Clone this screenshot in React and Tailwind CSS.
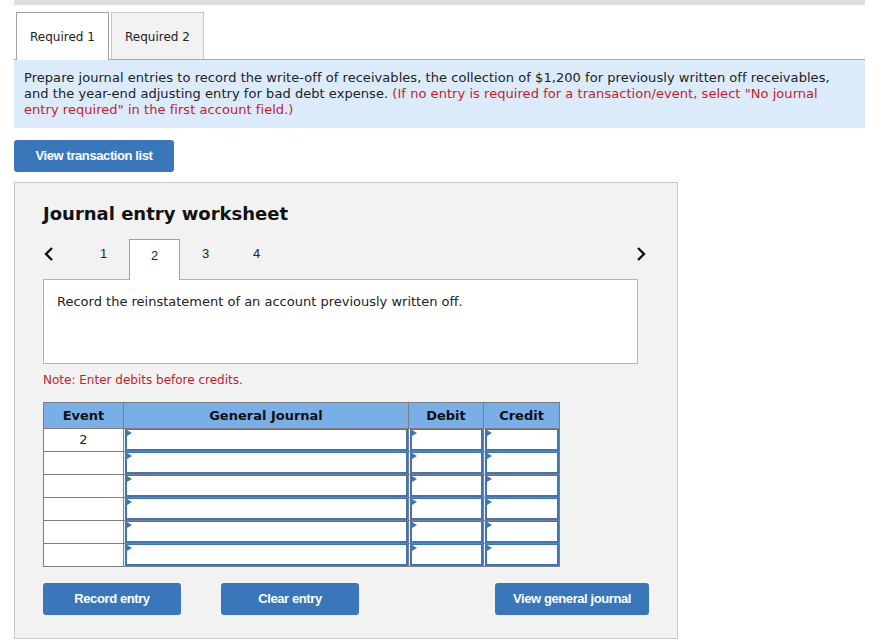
import React from "react";

const verdana = { fontFamily: '"DejaVu Sans", Verdana, sans-serif' };
const arial = { fontFamily: '"Liberation Sans", Arial, sans-serif' };
const narrow = { fontFamily: '"Liberation Sans Narrow", "Arial Narrow", "Liberation Sans", sans-serif' };

function Btn({ children, className = "" }) {
  return (
    <button
      className={"h-[32px] shrink-0 rounded-[3px] bg-[#3a76ba] text-white text-[13px] font-bold tracking-[-0.4px] " + className}
      style={narrow}
    >
      {children}
    </button>
  );
}

function Cell({ w }) {
  return (
    <div className={"h-[23px] border-l border-t border-[#7f7f7f] pl-px " + w}>
      <div className="relative h-full w-full border-x-2 border-b-2 border-t border-[#3f74b7] bg-white">
        <div className="absolute left-0 top-0 h-0 w-0 border-y-[3px] border-l-[5px] border-y-transparent border-l-[#3f74b7]" />
      </div>
    </div>
  );
}

export default function App() {
  const rows = [0, 1, 2, 3, 4, 5];
  return (
    <div className="w-[896px] h-[643px] overflow-hidden bg-white text-[#222]" style={verdana}>
      <div className="ml-[14px] w-[851px]">
        <div className="h-[5px] bg-[#dfdfdf]" />
        <div className="mt-[7px] flex items-end border-b border-[#a8a8a8] pl-[2px]">
          <div className="-mb-px flex h-[48px] w-[93px] items-center justify-center border border-b-0 border-[#a0a0a0] bg-white text-[12px]">
            Required 1
          </div>
          <div className="ml-[2px] flex h-[47px] w-[93px] items-center justify-center border border-b-0 border-[#c8c8c8] bg-[#f2f2f2] pt-px text-[12px]">
            Required 2
          </div>
        </div>
        <div className="bg-[#dbebf9] px-[10px] pt-[10px] pb-[10px] text-[13px] leading-[16px] tracking-[0.05px] text-[#222]">
          Prepare journal entries to record the write-off of receivables, the collection of $1,200 for previously written off receivables, and the year-end adjusting entry for bad debt expense.{" "}
          <span className="text-[#c3222b]">(If no entry is required for a transaction/event, select "No journal entry required" in the first account field.)</span>
        </div>
        <Btn className="mt-[12px] w-[160px]">View transaction list</Btn>
        <div className="mt-[10px] w-[664px] border border-[#c8c8c8] bg-[#f2f2f2] pl-[28px] pr-[39px] pt-[19px] pb-[23px]">
          <div className="text-[18px] font-bold leading-[24px] text-[#111]">Journal entry worksheet</div>
          <div className="mt-[13px] flex h-[40px] items-start">
            <div className="flex h-[30px] w-[35px] items-center">
              <svg width="10" height="16" viewBox="0 0 10 16" className="ml-[1px]">
                <polyline points="8,2 2,8 8,14" fill="none" stroke="#111" strokeWidth="2.4" />
              </svg>
            </div>
            <div className="flex h-full items-start text-[13px]" style={arial}>
              <div className="flex h-[30px] w-[51px] items-center justify-center">1</div>
              <div className="relative z-10 -mb-px flex h-[41px] w-[51px] items-start justify-center border border-b-0 border-[#a0a0a0] bg-white pt-[6px]">2</div>
              <div className="flex h-[30px] w-[51px] items-center justify-center">3</div>
              <div className="flex h-[30px] w-[51px] items-center justify-center">4</div>
            </div>
            <div className="flex-1" />
            <div className="flex h-[30px] items-center">
              <svg width="10" height="16" viewBox="0 0 10 16" className="-mr-[8px]">
                <polyline points="2,2 8,8 2,14" fill="none" stroke="#111" strokeWidth="2.4" />
              </svg>
            </div>
          </div>
          <div className="h-[85px] border border-[#b4b4b4] bg-white px-[13px] pt-[14px] text-[13px] leading-[16px]">
            Record the reinstatement of an account previously written off.
          </div>
          <div className="mt-[8px] text-[12px] leading-[16px] text-[#c3222b]">Note: Enter debits before credits.</div>
          <div className="mt-[14px] w-[517px] border-r border-b border-[#7f7f7f]">
            <div className="flex h-[26px] bg-[#7aaee6] text-[13px] font-bold text-[#111]">
              <div className="flex w-[80px] items-center justify-center border-l border-t border-[#7f7f7f]">Event</div>
              <div className="flex w-[285px] items-center justify-center border-l border-t border-[#7f7f7f]">General Journal</div>
              <div className="flex w-[75px] items-center justify-center border-l border-t border-[#7f7f7f]">Debit</div>
              <div className="flex w-[76px] items-center justify-center border-l border-t border-[#7f7f7f]">Credit</div>
            </div>
            {rows.map((r) => (
              <div key={r} className="flex">
                <div className="flex h-[23px] w-[80px] items-center justify-center border-l border-t border-[#7f7f7f] bg-white text-[13px]">
                  {r === 0 ? "2" : ""}
                </div>
                <Cell w="w-[285px]" />
                <Cell w="w-[75px]" />
                <Cell w="w-[76px]" />
              </div>
            ))}
          </div>
          <div className="mt-[16px] flex">
            <Btn className="w-[138px]">Record entry</Btn>
            <Btn className="ml-[40px] w-[138px]">Clear entry</Btn>
            <Btn className="ml-[136px] w-[154px]">View general journal</Btn>
          </div>
        </div>
      </div>
    </div>
  );
}
